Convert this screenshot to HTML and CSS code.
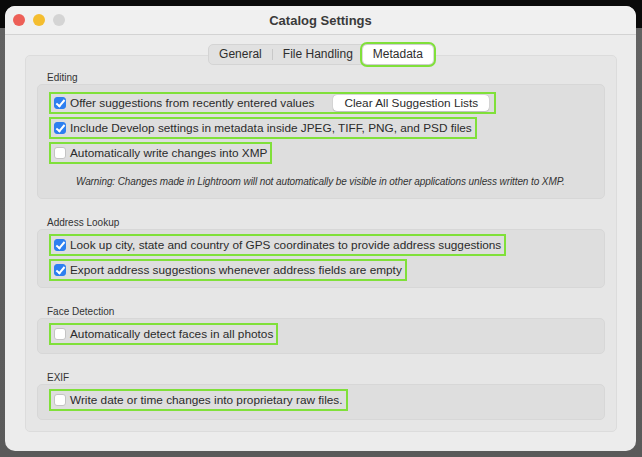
FILE: index.html
```html
<!DOCTYPE html>
<html lang="en">
<head>
    <meta charset="UTF-8">
    <title>Catalog Settings</title>
    <link rel="stylesheet" href="styles.css">
</head>
<body>
    <div class="window">
        <div class="titlebar">
            <div class="lights">
                <span class="light red"></span>
                <span class="light yellow"></span>
                <span class="light gray"></span>
            </div>
            <div class="title">Catalog Settings</div>
        </div>

        <div class="content">
            <div class="tabs">
                <span class="tab">General</span>
                <span class="sep"></span>
                <span class="tab">File Handling</span>
                <span class="tab selected">Metadata</span>
            </div>

            <div class="panel">
                <div class="section-title">Editing</div>
                <div class="group editing">
                    <div class="row mark">
                        <span class="check on"></span>
                        <span class="text">Offer suggestions from recently entered values</span>
                        <button class="btn">Clear All Suggestion Lists</button>
                    </div>
                    <div class="row mark">
                        <span class="check on"></span>
                        <span class="text">Include Develop settings in metadata inside JPEG, TIFF, PNG, and PSD files</span>
                    </div>
                    <div class="row mark">
                        <span class="check"></span>
                        <span class="text">Automatically write changes into XMP</span>
                    </div>
                    <div class="warning">Warning: Changes made in Lightroom will not automatically be visible in other applications unless written to XMP.</div>
                </div>

                <div class="section-title">Address Lookup</div>
                <div class="group">
                    <div class="row mark">
                        <span class="check on"></span>
                        <span class="text">Look up city, state and country of GPS coordinates to provide address suggestions</span>
                    </div>
                    <div class="row mark">
                        <span class="check on"></span>
                        <span class="text">Export address suggestions whenever address fields are empty</span>
                    </div>
                </div>

                <div class="section-title">Face Detection</div>
                <div class="group single">
                    <div class="row mark">
                        <span class="check"></span>
                        <span class="text">Automatically detect faces in all photos</span>
                    </div>
                </div>

                <div class="section-title">EXIF</div>
                <div class="group single">
                    <div class="row mark">
                        <span class="check"></span>
                        <span class="text">Write date or time changes into proprietary raw files.</span>
                    </div>
                </div>
            </div>
        </div>
    </div>
</body>
</html>
```

FILE: styles.css
```css
body {
    margin: 0;
    width: 642px;
    height: 457px;
    overflow: hidden;
    background: linear-gradient(to bottom, #0a0a0a 0, #0a0a0a 28px, #626262 28px, #5a5a5a 100%);
    font-family: "Liberation Sans", Arial, sans-serif;
    color: #2b2b2b;
}
.window {
    margin: 6px 0 0 5px;
    width: 631px;
    height: 445px;
    background-color: #ececec;
    border-radius: 10px;
    overflow: hidden;
    display: flex;
    flex-direction: column;
}
.titlebar {
    height: 28px;
    flex: none;
    display: flex;
    align-items: center;
    position: relative;
    background-color: #f0f0f0;
    border-bottom: 1px solid #d3d3d3;
}
.lights {
    display: flex;
    gap: 8px;
    padding-left: 8px;
}
.light {
    width: 12px;
    height: 12px;
    border-radius: 50%;
}
.light.red { background-color: #ed5f57; }
.light.yellow { background-color: #f4bd2f; }
.light.gray { background-color: #d4d4d4; }
.title {
    position: absolute;
    left: 0;
    right: 0;
    text-align: center;
    font-size: 13px;
    font-weight: bold;
    color: #3a3a3a;
}
.content {
    padding: 9px 19px 0 20px;
    display: flex;
    flex-direction: column;
}
.tabs {
    align-self: center;
    margin-left: 2px;
    display: flex;
    align-items: center;
    height: 19px;
    padding: 0 2px 0 0;
    background-color: #e1e1e1;
    border: 1px solid #d4d4d4;
    border-radius: 5px;
    position: relative;
    z-index: 1;
    font-size: 12px;
    color: #2e2e2e;
}
.tab {
    padding: 0 10px;
    line-height: 19px;
}
.sep {
    width: 1px;
    height: 11px;
    background-color: #c8c8c8;
}
.tab.selected {
    margin-left: 0;
    padding: 0 10px;
    background-color: #fff;
    border-radius: 4px;
    box-shadow: 0 0 1px rgba(0, 0, 0, 0.3);
    outline: 2px solid #80e03a;
    outline-offset: 1px;
}
.panel {
    margin-top: -10px;
    height: 377px;
    box-sizing: border-box;
    padding: 16px 11px 11px;
    background-color: #e6e6e6;
    border: 1px solid #dcdcdc;
    border-radius: 5px;
}
.section-title {
    font-size: 10px;
    line-height: 12px;
    padding-left: 10px;
    color: #333;
    margin-top: 18px;
}
.section-title:first-child {
    margin-top: 0;
}
.group {
    background-color: #dedede;
    border: 1px solid #d7d7d7;
    border-radius: 5px;
    padding: 4px 11px 6px;
    display: flex;
    flex-direction: column;
    align-items: flex-start;
    gap: 3px;
}
.group.editing {
    padding-top: 7px;
    padding-bottom: 11px;
}
.group.single {
    padding-bottom: 8px;
}
.row {
    display: flex;
    align-items: center;
    gap: 4px;
    height: 16px;
    padding: 1px 3px;
    font-size: 11.8px;
    color: #2b2b2b;
}
.mark {
    border: 2px solid #80e03a;
}
.check {
    width: 12px;
    height: 12px;
    box-sizing: border-box;
    border: 1px solid #c4c4c4;
    border-radius: 3px;
    background-color: #fff;
    position: relative;
}
.check.on {
    background-color: #2d7ff0;
    border-color: #2d7ff0;
}
.check.on::after {
    content: "";
    position: absolute;
    left: 3px;
    top: 0px;
    width: 3px;
    height: 7px;
    border: solid #fff;
    border-width: 0 2px 2px 0;
    transform: rotate(40deg);
}
.btn {
    margin-left: 15px;
    margin-right: 2px;
    height: 16px;
    padding: 0 11px;
    font-family: inherit;
    font-size: 11.8px;
    color: #2b2b2b;
    background-color: #fff;
    border: none;
    border-radius: 4px;
    box-shadow: 0 0 1px rgba(0, 0, 0, 0.35), 0 1px 1px rgba(0, 0, 0, 0.1);
}
.warning {
    margin-top: 9px;
    padding-left: 27px;
    font-size: 10px;
    font-style: italic;
    letter-spacing: -0.1px;
    color: #333;
}
```
